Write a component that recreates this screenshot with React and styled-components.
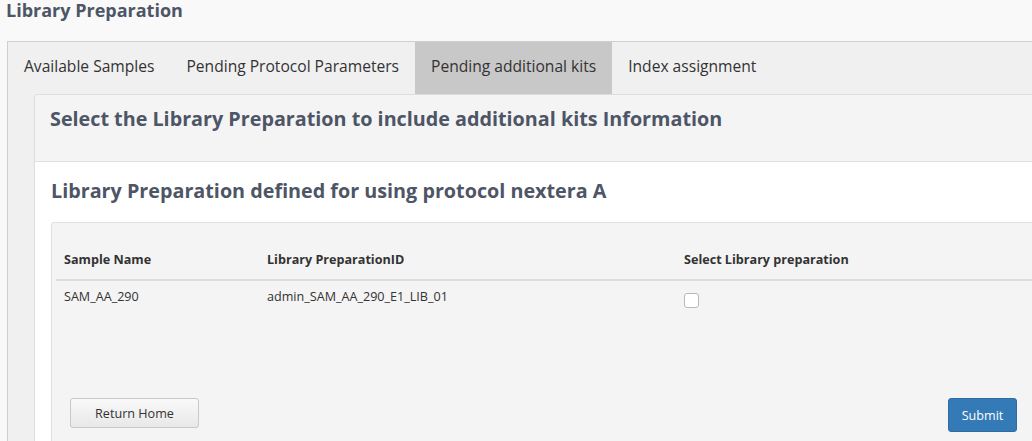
import styled, { createGlobalStyle } from 'styled-components';

const GlobalStyle = createGlobalStyle`
  body {
    margin: 0;
    background: #f9f9f9;
    font-family: "Open Sans", "Noto Sans", sans-serif;
    color: #333333;
    overflow: hidden;
  }
`;

const Page = styled.div`
  width: 1240px;
  padding: 0 0 0 7px;
`;

const PageTitle = styled.h1`
  margin: 0 0 0 -1px;
  height: 41px;
  font-size: 18px;
  line-height: 20px;
  font-weight: 700;
  color: #4d5566;
`;

const TabPanel = styled.div`
  border: 1px solid #cfcfcf;
  border-right: none;
  background: #f0f0f0;
  padding-left: 26px;
`;

const TabBar = styled.div`
  display: flex;
  height: 52px;
  margin-left: -26px;
`;

const Tab = styled.div`
  display: flex;
  align-items: center;
  padding: 0 16px 4px;
  font-size: 15.6px;
  color: #333333;
  background: ${(p) => (p.active ? '#c8c8c8' : 'transparent')};
`;

const Card = styled.div`
  background: #ffffff;
  border: 1px solid #dddddd;
  border-right: none;
  border-radius: 4px 0 0 4px;
  overflow: hidden;
`;

const CardHeader = styled.div`
  background: #f4f4f4;
  height: 66px;
  padding: 0 15px;
  border-bottom: 1px solid #e0e0e0;
`;

const HeaderTitle = styled.h2`
  margin: 0;
  padding-top: 10px;
  font-size: 19.75px;
  line-height: 28px;
  font-weight: 700;
  color: #4d5566;
`;

const CardBody = styled.div`
  padding: 0 15px 10px 16px;
`;

const SectionTitle = styled.h3`
  margin: 0;
  padding: 16px 0 0;
  height: 44px;
  font-size: 19.75px;
  line-height: 26px;
  font-weight: 700;
  color: #4d5566;
`;

const TableBox = styled.div`
  background: #f4f4f4;
  border: 1px solid #e2e2e2;
  border-radius: 3px;
  box-shadow: 0 1px 2px rgba(0, 0, 0, 0.05);
  padding: 28px 0 30px 4px;
`;

const Table = styled.table`
  width: 1100px;
  border-collapse: collapse;
  font-size: 12.6px;
`;

const HeadCell = styled.th`
  text-align: left;
  font-weight: 700;
  color: #333333;
  padding: 0 8px 11px;
  width: ${(p) => p.w || 'auto'};
  border-bottom: 2px solid #dddddd;
`;

const Cell = styled.td`
  padding: 7px 8px 8px;
  vertical-align: top;
  height: 102px;
`;

const Checkbox = styled.input`
  appearance: none;
  display: block;
  margin: 5px 0 0;
  width: 15px;
  height: 15px;
  border: 1px solid #b8b8b8;
  border-radius: 3px;
  background: #ffffff;
`;

const Actions = styled.div`
  display: flex;
  justify-content: space-between;
  align-items: flex-start;
  padding: 0 0 0 14px;
  width: 947px;
`;

const Button = styled.button`
  font-family: inherit;
  font-size: 12.6px;
  white-space: nowrap;
  border-radius: 3px;
  cursor: pointer;
  border: 1px solid ${(p) => (p.primary ? '#2e6da4' : '#c8c8c8')};
  background: ${(p) => (p.primary ? '#337ab7' : 'linear-gradient(#f9f9f9, #e8e8e8)')};
  color: ${(p) => (p.primary ? '#ffffff' : '#333333')};
  height: ${(p) => (p.primary ? '34px' : '30px')};
  width: ${(p) => (p.primary ? '69px' : '129px')};
  padding: 0;
`;

export default function App() {
  return (
    <>
      <GlobalStyle />
      <Page>
        <PageTitle>Library Preparation</PageTitle>
        <TabPanel>
          <TabBar>
            <Tab>Available Samples</Tab>
            <Tab>Pending Protocol Parameters</Tab>
            <Tab active>Pending additional kits</Tab>
            <Tab>Index assignment</Tab>
          </TabBar>
          <Card>
            <CardHeader>
              <HeaderTitle>Select the Library Preparation to include additional kits Information</HeaderTitle>
            </CardHeader>
            <CardBody>
              <SectionTitle>Library Preparation defined for using protocol nextera A</SectionTitle>
              <TableBox>
                <Table>
                  <thead>
                    <tr>
                      <HeadCell w="187px">Sample Name</HeadCell>
                      <HeadCell w="401px">Library PreparationID</HeadCell>
                      <HeadCell>Select Library preparation</HeadCell>
                    </tr>
                  </thead>
                  <tbody>
                    <tr>
                      <Cell>SAM_AA_290</Cell>
                      <Cell>admin_SAM_AA_290_E1_LIB_01</Cell>
                      <Cell>
                        <Checkbox type="checkbox" />
                      </Cell>
                    </tr>
                  </tbody>
                </Table>
                <Actions>
                  <Button>Return Home</Button>
                  <Button primary>Submit</Button>
                </Actions>
              </TableBox>
            </CardBody>
          </Card>
        </TabPanel>
      </Page>
    </>
  );
}
